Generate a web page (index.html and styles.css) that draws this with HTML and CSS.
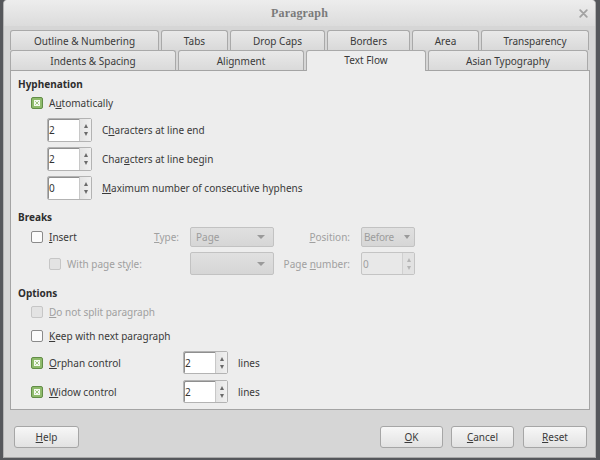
FILE: index.html
```html
<!DOCTYPE html>
<html>
<head>
<meta charset="utf-8">
<title>Paragraph</title>
<link rel="stylesheet" href="styles.css">
</head>
<body>
<div class="window">
  <div class="titlebar">
    <span></span>
    <span class="title">Paragraph</span>
    <span class="close"><svg width="9" height="9" viewBox="0 0 9 9"><path d="M1.2 1.2L7.8 7.8M7.8 1.2L1.2 7.8" stroke="#a2a2a2" stroke-width="1.8" stroke-linecap="round"/></svg></span>
  </div>

  <div class="tabs">
    <div class="tabrow row1">
      <div class="tab">Outline &amp; Numbering</div>
      <div class="tab">Tabs</div>
      <div class="tab">Drop Caps</div>
      <div class="tab">Borders</div>
      <div class="tab">Area</div>
      <div class="tab">Transparency</div>
    </div>
    <div class="tabrow row2">
      <div class="tab">Indents &amp; Spacing</div>
      <div class="tab">Alignment</div>
      <div class="tab active">Text Flow</div>
      <div class="tab">Asian Typography</div>
    </div>
  </div>

  <div class="panel">
    <div class="header">Hyphenation</div>
    <div class="row check-row auto-row">
      <span class="cb checked"><svg width="12" height="12" viewBox="0 0 12 12"><rect x=".5" y=".5" width="11" height="11" rx="1.5" fill="#8fbb6c" stroke="#628d47"/><rect x="3" y="3" width="6" height="6" fill="#f4f9f0"/><path d="M4.2 4.2L7.8 7.8M7.8 4.2L4.2 7.8" stroke="#9cc47d" stroke-width="1"/></svg></span>
      <span class="label">A<u>u</u>tomatically</span>
    </div>
    <div class="row spin-row first">
      <span class="spin"><span class="field">2</span><span class="arrows"><i class="up"></i><i class="down"></i></span></span>
      <span class="label">C<u>h</u>aracters at line end</span>
    </div>
    <div class="row spin-row">
      <span class="spin"><span class="field">2</span><span class="arrows"><i class="up"></i><i class="down"></i></span></span>
      <span class="label">Char<u>a</u>cters at line begin</span>
    </div>
    <div class="row spin-row">
      <span class="spin"><span class="field">0</span><span class="arrows"><i class="up"></i><i class="down"></i></span></span>
      <span class="label"><u>M</u>aximum number of consecutive hyphens</span>
    </div>

    <div class="header breaks-header">Breaks</div>
    <div class="breaks">
      <div class="bcell c1 r1"><span class="cb"></span><span class="label"><u>I</u>nsert</span></div>
      <div class="bcell lab r1 dis"><span><u>T</u>ype:</span></div>
      <div class="combo r1"><span>Page</span><i class="drop"></i></div>
      <div class="bcell lab r1 dis"><span><u>P</u>osition:</span></div>
      <div class="combo small r1"><span>Before</span><i class="drop"></i></div>

      <div class="bcell c1 r2 sub"><span class="cb disabled"></span><span class="label dis">With page st<u>y</u>le:</span></div>
      <div class="bcell r2"></div>
      <div class="combo r2"><span></span><i class="drop"></i></div>
      <div class="bcell lab r2 dis"><span>Page <u>n</u>umber:</span></div>
      <div class="spin dspin r2"><span class="field">0</span><span class="arrows"><i class="up"></i><i class="down"></i></span></div>
    </div>

    <div class="header options-header">Options</div>
    <div class="row check-row opt-first">
      <span class="cb disabled"></span>
      <span class="label dis"><u>D</u>o not split paragraph</span>
    </div>
    <div class="row check-row opt-keep">
      <span class="cb"></span>
      <span class="label"><u>K</u>eep with next paragraph</span>
    </div>
    <div class="row check-row opt-spin orphan">
      <span class="cb checked"><svg width="12" height="12" viewBox="0 0 12 12"><rect x=".5" y=".5" width="11" height="11" rx="1.5" fill="#8fbb6c" stroke="#628d47"/><rect x="3" y="3" width="6" height="6" fill="#f4f9f0"/><path d="M4.2 4.2L7.8 7.8M7.8 4.2L4.2 7.8" stroke="#9cc47d" stroke-width="1"/></svg></span>
      <span class="label wide"><u>O</u>rphan control</span>
      <span class="spin"><span class="field">2</span><span class="arrows"><i class="up"></i><i class="down"></i></span></span>
      <span class="lines">lines</span>
    </div>
    <div class="row check-row opt-spin widow">
      <span class="cb checked"><svg width="12" height="12" viewBox="0 0 12 12"><rect x=".5" y=".5" width="11" height="11" rx="1.5" fill="#8fbb6c" stroke="#628d47"/><rect x="3" y="3" width="6" height="6" fill="#f4f9f0"/><path d="M4.2 4.2L7.8 7.8M7.8 4.2L4.2 7.8" stroke="#9cc47d" stroke-width="1"/></svg></span>
      <span class="label wide"><u>W</u>idow control</span>
      <span class="spin"><span class="field">2</span><span class="arrows"><i class="up"></i><i class="down"></i></span></span>
      <span class="lines">lines</span>
    </div>
  </div>

  <div class="buttons">
    <button class="btn help"><u>H</u>elp</button>
    <span class="spacer"></span>
    <button class="btn ok"><u>O</u>K</button>
    <button class="btn cancel"><u>C</u>ancel</button>
    <button class="btn reset"><u>R</u>eset</button>
  </div>
</div>
</body>
</html>
```

FILE: styles.css
```css
* { box-sizing: border-box; }
html, body { margin: 0; padding: 0; }
body {
  width: 600px;
  height: 460px;
  overflow: hidden;
  background: #55575b;
  font-family: "Noto Sans", "Open Sans", sans-serif;
  font-size: 10px;
  color: #3a3a3a;
}
u { text-decoration: underline; text-underline-offset: 1px; }

.window {
  margin-left: 3px;
  width: 593px;
  height: 458px;
  background: #d6d6d6;
  border-left: 1px solid #b4b4b4;
  border-right: 1px solid #b4b4b4;
  border-bottom: 1px solid #a8a8a8;
  border-radius: 4px 4px 0 0;
  display: flex;
  flex-direction: column;
}

.titlebar {
  height: 26px;
  flex: none;
  display: grid;
  grid-template-columns: 1fr auto 1fr;
  align-items: center;
  background: linear-gradient(#ededed, #dcdcdc);
  border-radius: 4px 4px 0 0;
}
.title {
  font-family: "Liberation Serif", serif;
  font-weight: bold;
  font-size: 12px;
  color: #7a7a7a;
  letter-spacing: 0.2px;
}
.close {
  justify-self: end;
  padding-right: 7px;
  display: flex;
  align-items: center;
}

.tabs {
  padding: 4px 5px 0 6px;
  flex: none;
}
.tabrow {
  display: grid;
  column-gap: 2px;
  height: 20px;
}
.row1 { grid-template-columns: 149px 67px 95px 83px 67px 108px; }
.row2 { grid-template-columns: 166px 126px 120px 160px; }
.tab {
  border: 1px solid #a9a9a9;
  border-bottom: none;
  border-radius: 3px 3px 0 0;
  background: linear-gradient(#e9e9e9, #d9d9d9);
  display: flex;
  align-items: center;
  justify-content: center;
  color: #3a3a3a;
}
.tab.active {
  background: #ededed;
  position: relative;
  z-index: 1;
  height: 21px;
  padding-bottom: 2px;
}

.panel {
  margin: 0 5px 0 6px;
  height: 340px;
  flex: none;
  background: #ededed;
  border: 1px solid #a4a4a4;
  padding: 5px 7px 0;
}

.header {
  height: 16px;
  line-height: 16px;
  font-weight: bold;
  color: #2e2e2e;
}
.row {
  display: flex;
  align-items: center;
}
.check-row {
  padding-left: 13px;
  height: 16px;
}
.auto-row { margin-top: 3px; }
.check-row .label { margin-left: 6px; }

.cb {
  width: 12px;
  height: 12px;
  flex: none;
  display: inline-block;
  border: 1px solid #8a8a8a;
  border-radius: 2px;
  background: #fbfbfb;
}
.cb.checked { border: none; background: none; }
.cb.checked svg { display: block; }
.cb.disabled { background: #e3e3e3; border-color: #c6c6c6; }

.dis { color: #a0a0a0; }

.spin-row {
  padding-left: 29px;
  height: 24px;
  margin-top: 5px;
}
.spin-row.first { margin-top: 7px; }
.spin-row .label { margin-left: 10px; }

.spin {
  width: 45px;
  height: 24px;
  flex: none;
  display: flex;
  border: 1px solid #b3b3b3;
  border-radius: 2px;
  background: #fff;
  box-shadow: inset 1px 1px 0 #8f8f8f;
}
.spin .field {
  flex: 1;
  display: flex;
  align-items: center;
  padding-left: 1px;
  color: #333;
}
.spin .arrows {
  width: 12px;
  flex: none;
  display: flex;
  flex-direction: column;
  justify-content: center;
  align-items: center;
  gap: 4px;
  background: linear-gradient(90deg, #e4e4e4, #f0f0f0);
  border-left: 1px solid #c8c8c8;
}
.arrows i {
  width: 0;
  height: 0;
  border-left: 2.5px solid transparent;
  border-right: 2.5px solid transparent;
}
.arrows .up { border-bottom: 4px solid #6a6a6a; }
.arrows .down { border-top: 4px solid #6a6a6a; }

.breaks-header { margin-top: 9px; }
.breaks {
  display: grid;
  padding-left: 13px;
  grid-template-columns: 119px 40px 84px 87px 54px;
  grid-template-rows: 20px 23px;
  row-gap: 5px;
  margin-top: 2px;
}
.bcell {
  display: flex;
  align-items: center;
}
.bcell.c1 .label { margin-left: 6px; }
.bcell.sub { padding-left: 18px; }
.bcell.lab { justify-content: flex-end; padding-right: 11px; }
.combo {
  display: flex;
  align-items: center;
  justify-content: space-between;
  padding: 0 8px 0 5px;
  background: linear-gradient(#e0e0e0, #d6d6d6);
  border: 1px solid #c2c2c2;
  border-radius: 2px;
  color: #9c9c9c;
  overflow: hidden;
}
.combo.small { padding: 0 4px 0 2px; }
.combo.small span { letter-spacing: -0.2px; }
.combo .drop {
  width: 0;
  height: 0;
  flex: none;
  border-left: 4px solid transparent;
  border-right: 4px solid transparent;
  border-top: 4px solid #9a9a9a;
}
.combo.small .drop {
  border-left-width: 3.5px;
  border-right-width: 3.5px;
  margin-left: 3px;
}
.dspin {
  width: 54px;
  height: 23px;
  background: #e8e8e8;
  border-color: #c4c4c4;
  box-shadow: none;
}
.dspin .field { color: #a0a0a0; }
.dspin .arrows { background: #e2e2e2; border-left-color: #d0d0d0; }
.dspin .up { border-bottom-color: #b4b4b4; }
.dspin .down { border-top-color: #b4b4b4; }

.options-header { margin-top: 10px; }
.opt-first { margin-top: 3px; }
.opt-keep { margin-top: 8px; }
.opt-spin { height: 23px; }
.opt-spin .spin { height: 23px; }
.orphan { margin-top: 7px; }
.widow { margin-top: 6px; }
.label.wide { width: 134px; flex: none; }
.lines { margin-left: 10px; }

.buttons {
  display: flex;
  align-items: flex-start;
  padding: 16px 8px 0 10px;
  gap: 8px;
}
.spacer { flex: 1; }
.btn {
  font-family: inherit;
  font-size: 10px;
  color: #3a3a3a;
  height: 22px;
  border: 1px solid #a6a6a6;
  border-radius: 3px;
  background: linear-gradient(#f7f7f7, #e2e2e2);
  padding: 0;
  margin: 0;
}
.help { width: 65px; }
.ok { width: 63px; }
.cancel { width: 63px; }
.reset { width: 64px; margin-left: 1px; }
```
